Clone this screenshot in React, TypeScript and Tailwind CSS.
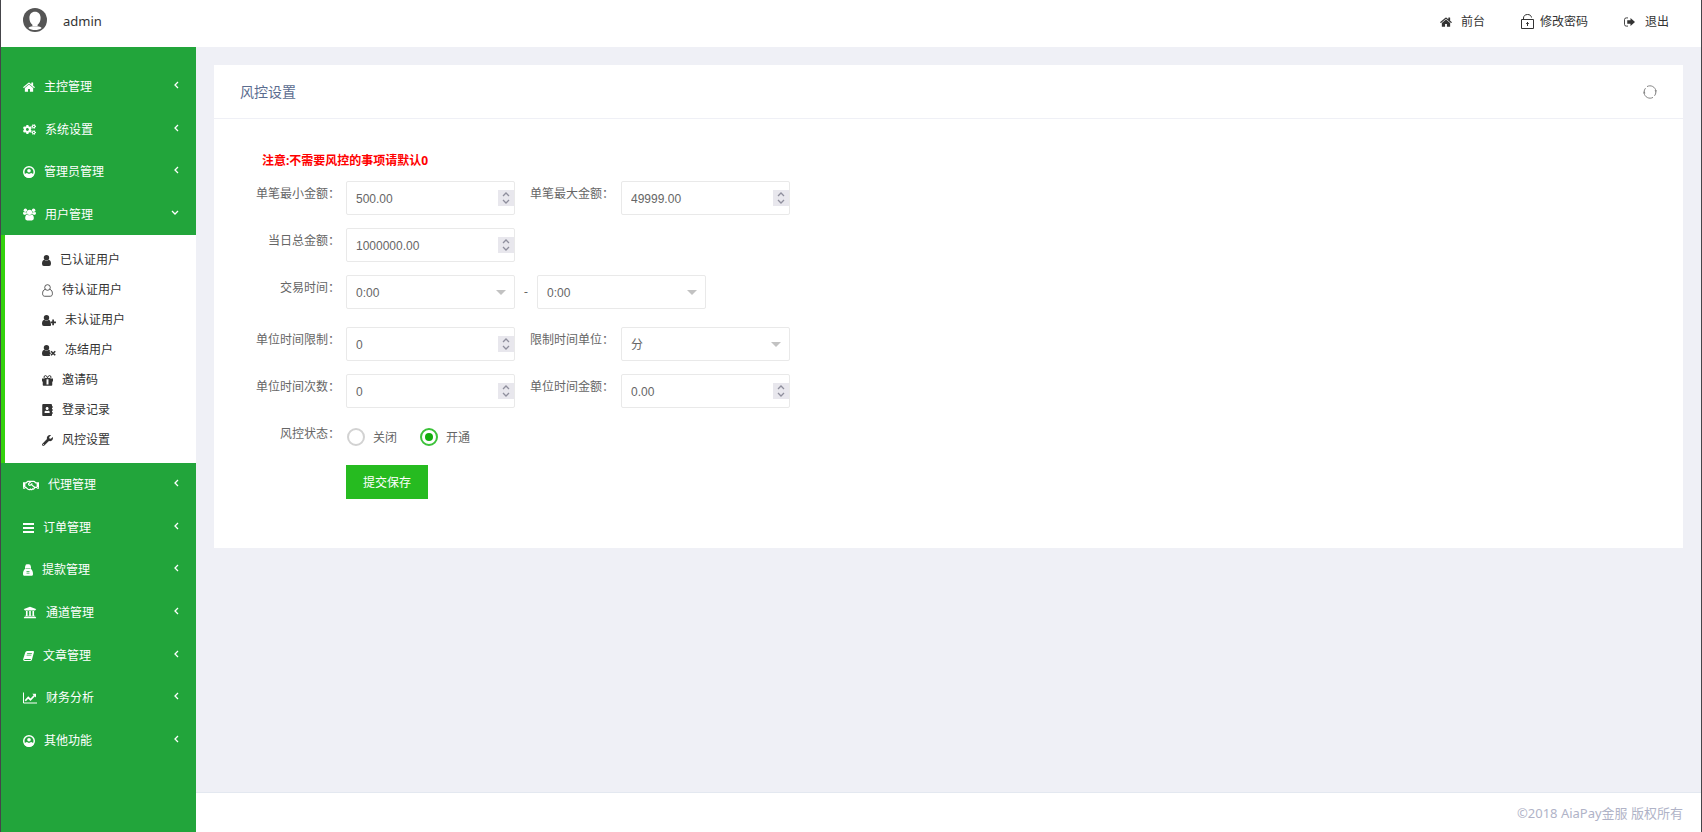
import { useState } from "react";
import type { ReactNode } from "react";
import { FaAddressBook, FaCogs, FaRegHandshake, FaUniversity, FaWrench } from "react-icons/fa";

function HomeIcon({ className }: { className?: string }) {
  return (
    <svg viewBox="64 192 1664 1344" fill="currentColor" className={className}>
      <path d="M1472 992v480q0 26-19 45t-45 19h-384v-384h-256v384h-384q-26 0-45-19t-19-45v-480q0-1 .5-3t.5-3l575-474 575 474q1 2 1 6zm223-69l-62 74q-8 9-21 11h-3q-13 0-21-7l-692-577-692 577q-12 8-24 7-13-2-21-11l-62-74q-8-10-7-23.5t11-21.5l719-599q32-26 76-26t76 26l244 204v-195q0-14 9-23t23-9h192q14 0 23 9t9 23v408l219 182q10 8 11 21.5t-7 23.5z" />
    </svg>
  );
}

function CircleUserIcon({ className }: { className?: string }) {
  return (
    <svg viewBox="0 0 24 24" fill="none" className={className}>
      <circle cx="12" cy="12" r="10.500" stroke="currentColor" strokeWidth="3" />
      <path d="M2.500 19.500Q3.500 15 7.800 14.200Q12 17.500 16.200 14.200Q20.500 15 21.500 19.500Q17 24 12 24T2.500 19.500z" fill="currentColor" />
      <circle cx="12" cy="9.500" r="3.600" fill="currentColor" />
    </svg>
  );
}

function AvatarIcon({ className }: { className?: string }) {
  return (
    <svg viewBox="0 0 24 24" className={className}>
      <circle cx="12" cy="12" r="12" fill="#555" />
      <path d="M12 3.800c-3.500 0-5.600 2.600-5.600 6c0 3 1.200 5.700 3 7v1.200h5.200v-1.200c1.800-1.300 3-4 3-7c0-3.400-2.100-6-5.600-6z" fill="#fff" />
      <path d="M5.300 20c1.400-1.500 4-1.700 6.700-1.700s5.300.2 6.700 1.700c-1.800 1.400-4.200 2-6.700 2s-4.900-.6-6.700-2z" fill="#fff" />
    </svg>
  );
}

function GroupIcon({ className }: { className?: string }) {
  return (
    <svg viewBox="0 0 27 25" fill="currentColor" className={className}>
      <circle cx="13.500" cy="8" r="5.400" />
      <circle cx="5" cy="3.600" r="3.600" />
      <circle cx="22" cy="3.600" r="3.600" />
      <path d="M9 12.300Q13.500 16 18 12.300Q22.500 13 22.500 20.500Q22.500 25 18.500 25H8.500Q4.500 25 4.500 20.500Q4.500 13 9 12.300z" />
      <path d="M1.700 6.600Q4.500 8.600 7.200 7.200Q7.300 9.500 8.500 11.300Q5.800 11.500 4.300 13.500Q0 13.500 0 10.600Q0 7.200 1.700 6.600zM25.300 6.600Q22.500 8.600 19.800 7.200Q19.700 9.500 18.500 11.300Q21.200 11.500 22.700 13.500Q27 13.500 27 10.600Q27 7.200 25.300 6.600z" />
    </svg>
  );
}

function UserIcon({ className }: { className?: string }) {
  return (
    <svg viewBox="0 0 18 22" fill="currentColor" className={className}>
      <circle cx="9" cy="5.400" r="5.400" />
      <path d="M4.500 9.500Q9 13.500 13.500 9.500Q18 10.300 18 17.500Q18 22 14.200 22H3.800Q0 22 0 17.500Q0 10.300 4.500 9.500z" />
    </svg>
  );
}

function UserPlusIcon({ className }: { className?: string }) {
  return (
    <svg viewBox="0 0 28 22" fill="currentColor" className={className}>
      <circle cx="9" cy="5.400" r="5.400" />
      <path d="M4.500 9.500Q9 13.500 13.500 9.500Q15 9.700 16 11.500V16.500H18V21Q16.500 22 14.200 22H3.800Q0 22 0 17.500Q0 10.300 4.500 9.500z" />
      <path d="M20.500 9h3.400v4h4v3.400h-4v4h-3.400v-4h-4V13h4z" />
    </svg>
  );
}

function UserTimesIcon({ className }: { className?: string }) {
  return (
    <svg viewBox="0 0 28 22" fill="currentColor" className={className}>
      <circle cx="9" cy="5.400" r="5.400" />
      <path d="M4.500 9.500Q9 13.500 13.500 9.500Q15 9.700 16.500 12L15 13.500L18 16.500L15 19.500L16.500 21.500Q15.500 22 14.200 22H3.800Q0 22 0 17.500Q0 10.300 4.500 9.500z" />
      <path d="M18 12.500l8.500 8M26.500 12.500l-8.500 8" stroke="currentColor" strokeWidth="3.200" />
    </svg>
  );
}

function UserOutlineIcon({ className }: { className?: string }) {
  return (
    <svg viewBox="0 0 22 26" fill="none" stroke="currentColor" strokeWidth="1.600" className={className}>
      <circle cx="11" cy="7" r="5.600" />
      <path d="M6.500 10.800C2.500 11.500 1.200 15 1.200 19.500c0 3 1.600 5 4.200 5h11.200c2.600 0 4.200-2 4.200-5c0-4.500-1.300-8-5.300-8.700" />
    </svg>
  );
}

function GiftIcon({ className }: { className?: string }) {
  return (
    <svg viewBox="0 0 22 22" fill="currentColor" className={className}>
      <path fillRule="evenodd" d="M0 7h22v6h-1.500v7q0 1.500-1.500 1.500H3Q1.500 21.500 1.500 20v-7H0zM9 8.500v10.500h4V8.500z" />
      <path d="M11 7Q4 8 4 4.500Q4 1.200 7 1.200Q9.500 1.200 11 5.500Q12.500 1.200 15 1.200Q18 1.200 18 4.500Q18 8 11 7z" fill="none" stroke="currentColor" strokeWidth="2" />
    </svg>
  );
}

function BarsIcon({ className }: { className?: string }) {
  return (
    <svg viewBox="0 0 11 12" fill="currentColor" className={className}>
      <path d="M0 1h11v2H0zM0 5h11v2H0zM0 9h11v2H0z" />
    </svg>
  );
}

function BagIcon({ className }: { className?: string }) {
  return (
    <svg viewBox="0 0 20 24" fill="currentColor" className={className}>
      <path
        fillRule="evenodd"
        d="M5.500 1.500C7 0 13 0 14.500 1.500L16 6v4c2.500 2 4 5 4 10c0 2.500-1 3.500-3 3.500H3c-2 0-3-1-3-3.500c0-5 1.500-8 4-10V6zM5 9v1h10V9zM7 14v1.400h6V14zM7 17.500v1.400h6v-1.400z"
      />
    </svg>
  );
}

function BookIcon({ className }: { className?: string }) {
  return (
    <svg viewBox="0 0 22 24" fill="currentColor" className={className}>
      <path
        fillRule="evenodd"
        d="M8 2h12.500q2 .5 1.300 3l-4 14.500Q17 22 14.500 22H3Q0 21.500.3 18.500L4.500 5Q5.500 2 8 2zM8.500 6l-.5 1.500h9.500L18 6zM7.500 9.500L7 11h9.500l.5-1.500zM2.500 18q0 2 1.500 2h10.500q1 0 1.400-1.300l.3-.9z"
      />
    </svg>
  );
}

function ChartIcon({ className }: { className?: string }) {
  return (
    <svg viewBox="0 0 28 24" fill="none" stroke="currentColor" className={className}>
      <path d="M1 1v21h27" strokeWidth="2" />
      <path d="M4.500 17.500l6-6.500l4.500 4.500l8-8.500" strokeWidth="3.600" />
      <path d="M18.500 3.500H26V11z" fill="currentColor" stroke="none" />
    </svg>
  );
}

function UnlockIcon({ className }: { className?: string }) {
  return (
    <svg viewBox="0 0 13 15" fill="none" stroke="currentColor" className={className}>
      <path d="M.5 5.500h12v9H.5zM2.500 5.500V4c0-2 1.500-3.500 4-3.500c2.300 0 3.700 1 4 3" />
      <path d="M6.500 8v4M5.200 9.500h2.600" />
    </svg>
  );
}

function SignOutIcon({ className }: { className?: string }) {
  return (
    <svg viewBox="0 0 22 20" fill="currentColor" className={className}>
      <path d="M8 1.800H4.500Q1 1.800 1 5.300v9.400q0 3.500 3.500 3.500H8" fill="none" stroke="currentColor" strokeWidth="1.800" />
      <path d="M6.500 6.500H13V2l9 8l-9 8v-4.500H6.500z" />
    </svg>
  );
}

function RefreshIcon({ className }: { className?: string }) {
  return (
    <svg viewBox="0 0 14 14" fill="none" stroke="currentColor" className={className}>
      <path d="M4 1.600A6 6 0 0 1 12.900 6M10 12.400A6 6 0 0 1 1.100 8" strokeWidth="0.900" />
      <path d="M1.100 7A6 6 0 0 1 2.500 3.200M12.900 7A6 6 0 0 1 11.500 10.800" strokeWidth="0.900" />
      <path d="M11.500 5.500H14L12.900 7.500zM0 8.200h2.500L1.100 6.200z" fill="currentColor" stroke="none" />
    </svg>
  );
}

function Chevron({ open }: { open: boolean }) {
  return open ? (
    <svg viewBox="0 0 8 5" fill="none" stroke="currentColor" strokeWidth="1.300" className="mb-1 h-[5px] w-2">
      <path d="M1 1l3 3l3-3" />
    </svg>
  ) : (
    <svg viewBox="0 0 5 8" fill="none" stroke="currentColor" strokeWidth="1.300" className="mb-1 h-2 w-[5px]">
      <path d="M4 1L1 4l3 3" />
    </svg>
  );
}

const MENU_TOP = [
  { label: "主控管理", icon: <HomeIcon className="h-[10px] w-3" /> },
  { label: "系统设置", icon: <FaCogs className="h-[13px] w-[13px]" /> },
  { label: "管理员管理", icon: <CircleUserIcon className="h-3 w-3" /> },
  { label: "用户管理", icon: <GroupIcon className="h-[13px] w-[13px]" />, open: true },
];

const USER_MENU = [
  { label: "已认证用户", icon: <UserIcon className="h-[11px] w-[9px]" /> },
  { label: "待认证用户", icon: <UserOutlineIcon className="h-[13px] w-[11px]" /> },
  { label: "未认证用户", icon: <UserPlusIcon className="h-[11px] w-[14px]" /> },
  { label: "冻结用户", icon: <UserTimesIcon className="h-[11px] w-[14px]" /> },
  { label: "邀请码", icon: <GiftIcon className="h-[11px] w-[11px]" /> },
  { label: "登录记录", icon: <FaAddressBook className="h-3 w-[11px]" /> },
  { label: "风控设置", icon: <FaWrench className="h-[11px] w-[11px]" /> },
];

const MENU_BOTTOM = [
  { label: "代理管理", icon: <FaRegHandshake className="h-[13px] w-4" /> },
  { label: "订单管理", icon: <BarsIcon className="h-3 w-[11px]" /> },
  { label: "提款管理", icon: <BagIcon className="h-3 w-[10px]" /> },
  { label: "通道管理", icon: <FaUniversity className="h-[13px] w-[14px]" /> },
  { label: "文章管理", icon: <BookIcon className="h-3 w-[11px]" /> },
  { label: "财务分析", icon: <ChartIcon className="h-3 w-[14px]" /> },
  { label: "其他功能", icon: <CircleUserIcon className="h-3 w-3" /> },
];

function MenuItem({ label, icon, open = false }: { label: string; icon: ReactNode; open?: boolean }) {
  return (
    <button type="button" aria-expanded={open} className="flex w-full items-center gap-[9px] pl-[22px] pr-[17px] pt-0.5 text-white">
      {icon}
      <span className="flex-1 text-left">{label}</span>
      <Chevron open={open} />
    </button>
  );
}

function NumberField({ id, value }: { id: string; value: string }) {
  return (
    <div className="relative w-[169px]">
      <input
        id={id}
        type="number"
        step="0.01"
        defaultValue={value}
        className="h-[34px] w-full appearance-none rounded-xs border border-[#e9e9e9] bg-white pl-[9px] pr-6 pt-0.5 font-['Liberation_Sans','Noto_Sans_CJK_SC',sans-serif] text-[#666] outline-none [-moz-appearance:textfield] [&::-webkit-inner-spin-button]:appearance-none"
      />
      <svg viewBox="0 0 16 16" className="pointer-events-none absolute right-px top-[9px] size-4" fill="none">
        <path d="M0 0h16v16H0z" fill="#e8e7ed" />
        <path d="M5 6l3-3l3 3M5 10l3 3l3-3" stroke="#8f8f9d" strokeWidth="1.300" />
      </svg>
    </div>
  );
}

function SelectField({ id, options, label }: { id: string; options: string[]; label?: string }) {
  return (
    <div className="relative w-[169px]">
      <select
        id={id}
        aria-label={label}
        className="h-[34px] w-full appearance-none rounded-xs border border-[#e9e9e9] bg-white pl-[9px] pr-6 pt-0.5 font-['Liberation_Sans','Noto_Sans_CJK_SC',sans-serif] text-[#666] outline-none"
      >
        {options.map((o) => (
          <option key={o}>{o}</option>
        ))}
      </select>
      <svg viewBox="0 0 10 5" className="pointer-events-none absolute right-[9px] top-[15px] h-[5px] w-[10px]" fill="#c2c2c2">
        <path d="M0 0h10L5 5z" />
      </svg>
    </div>
  );
}

function RowLabel({ id, children }: { id?: string; children: ReactNode }) {
  return (
    <label htmlFor={id} className="mr-[6px] w-[126px] pt-1 text-right leading-[18px]">
      {children}
    </label>
  );
}

function InlineLabel({ id, children }: { id: string; children: ReactNode }) {
  return (
    <label htmlFor={id} className="ml-[15px] w-[91px] pt-1 leading-[18px]">
      {children}
    </label>
  );
}

export default function App() {
  const [status, setStatus] = useState("on");

  const HOURS = Array.from({ length: 24 }, (_, i) => `${i}:00`);
  const STATUS_OPTS = [
    { id: "off", label: "关闭" },
    { id: "on", label: "开通" },
  ];

  return (
    <div className="flex min-h-screen flex-col border-x border-[#45454a] bg-[#eff0f6] font-['Noto_Sans','Noto_Sans_CJK_SC',sans-serif] text-xs text-[#666]">
      <header className="flex h-[47px] items-center justify-between bg-white pb-2 pl-[22px] pr-8 text-[#333]">
        <div className="flex items-center gap-4">
          <AvatarIcon className="size-6" />
          <span className="pt-1 text-[13px]">admin</span>
        </div>
        <nav className="flex items-center pt-1">
          <a href="#" className="flex items-center gap-[9px]">
            <HomeIcon className="h-[10px] w-3" />
            前台
          </a>
          <a href="#" className="ml-9 flex items-center gap-[6px]">
            <UnlockIcon className="h-[15px] w-[13px]" />
            修改密码
          </a>
          <a href="#" className="ml-9 flex items-center gap-[10px]">
            <SignOutIcon className="h-[10px] w-[11px]" />
            退出
          </a>
        </nav>
      </header>

      <div className="flex flex-1">
        <aside className="w-[195px] shrink-0 bg-[#22a53b] pt-[18px]">
          <div className="grid h-[170px] auto-rows-fr">
            {MENU_TOP.map((item) => (
              <MenuItem key={item.label} {...item} />
            ))}
          </div>
          <ul className="border-l-4 border-[#33d10d] bg-white pb-2 pt-[10px] text-[#333]">
            {USER_MENU.map((item) => (
              <li key={item.label}>
                <a href="#" className="flex h-[30px] items-center gap-[9px] pl-[37px]">
                  {item.icon}
                  {item.label}
                </a>
              </li>
            ))}
          </ul>
          <div className="grid h-[298px] auto-rows-fr">
            {MENU_BOTTOM.map((item) => (
              <MenuItem key={item.label} {...item} />
            ))}
          </div>
        </aside>

        <div className="flex min-w-0 flex-1 flex-col">
          <main className="flex-1 pl-[18px] pr-[18px] pt-[18px]">
            <section className="bg-white">
              <div className="flex h-[54px] items-center justify-between border-b border-[#eff0f6] px-[26px]">
                <h1 className="text-sm text-[#5a6c8f]">风控设置</h1>
                <button type="button" aria-label="刷新" className="text-[#777]">
                  <RefreshIcon className="size-[14px]" />
                </button>
              </div>

              <form className="pb-[49px] pt-[33px]" onSubmit={(e) => e.preventDefault()}>
                <p className="mb-[11px] pl-12 font-bold leading-[18px] text-[#f00]">注意:不需要风控的事项请默认0</p>
                <div className="flex flex-col gap-[13px]">
                  <div className="flex">
                    <RowLabel id="min">单笔最小金额：</RowLabel>
                    <NumberField id="min" value="500.00" />
                    <InlineLabel id="max">单笔最大金额：</InlineLabel>
                    <NumberField id="max" value="49999.00" />
                  </div>
                  <div className="flex">
                    <RowLabel id="total">当日总金额：</RowLabel>
                    <NumberField id="total" value="1000000.00" />
                  </div>
                  <div className="mb-[5px] flex">
                    <RowLabel id="start">交易时间：</RowLabel>
                    <SelectField id="start" options={HOURS} />
                    <span className="w-[22px] self-center text-center">-</span>
                    <SelectField id="end" options={HOURS} label="结束时间" />
                  </div>
                  <div className="flex">
                    <RowLabel id="limit">单位时间限制：</RowLabel>
                    <NumberField id="limit" value="0" />
                    <InlineLabel id="unit">限制时间单位：</InlineLabel>
                    <SelectField id="unit" options={["分", "时", "天"]} />
                  </div>
                  <div className="flex">
                    <RowLabel id="times">单位时间次数：</RowLabel>
                    <NumberField id="times" value="0" />
                    <InlineLabel id="amount">单位时间金额：</InlineLabel>
                    <NumberField id="amount" value="0.00" />
                  </div>
                  <div className="flex h-[31px]" role="radiogroup" aria-labelledby="status-label">
                    <span id="status-label" className="mr-[7px] w-[126px] pt-1 text-right leading-[18px]">
                      风控状态：
                    </span>
                    {STATUS_OPTS.map((opt) => (
                      <label key={opt.id} className="mr-[23px] flex items-center gap-2">
                        <input
                          type="radio"
                          name="status"
                          value={opt.id}
                          checked={status === opt.id}
                          onChange={() => setStatus(opt.id)}
                          className="grid size-[18px] appearance-none place-content-center rounded-full border-2 border-[#d2d2d2] before:size-2 before:rounded-full checked:border-[#3cc23a] checked:before:bg-[#12ad0c]"
                        />
                        <span className="pt-[3px]">{opt.label}</span>
                      </label>
                    ))}
                  </div>
                  <button
                    type="submit"
                    className="ml-[132px] h-[34px] self-start bg-[#26bb20] px-[17px] pt-0.5 text-white"
                  >
                    提交保存
                  </button>
                </div>
              </form>
            </section>
          </main>

          <footer className="flex h-10 items-center justify-end border-t border-[#e3e8f0] bg-white pr-[18px] pt-0.5 text-[13px] text-[#b0b3c7]">
            ©2018 AiaPay金服 版权所有
          </footer>
        </div>
      </div>
    </div>
  );
}
